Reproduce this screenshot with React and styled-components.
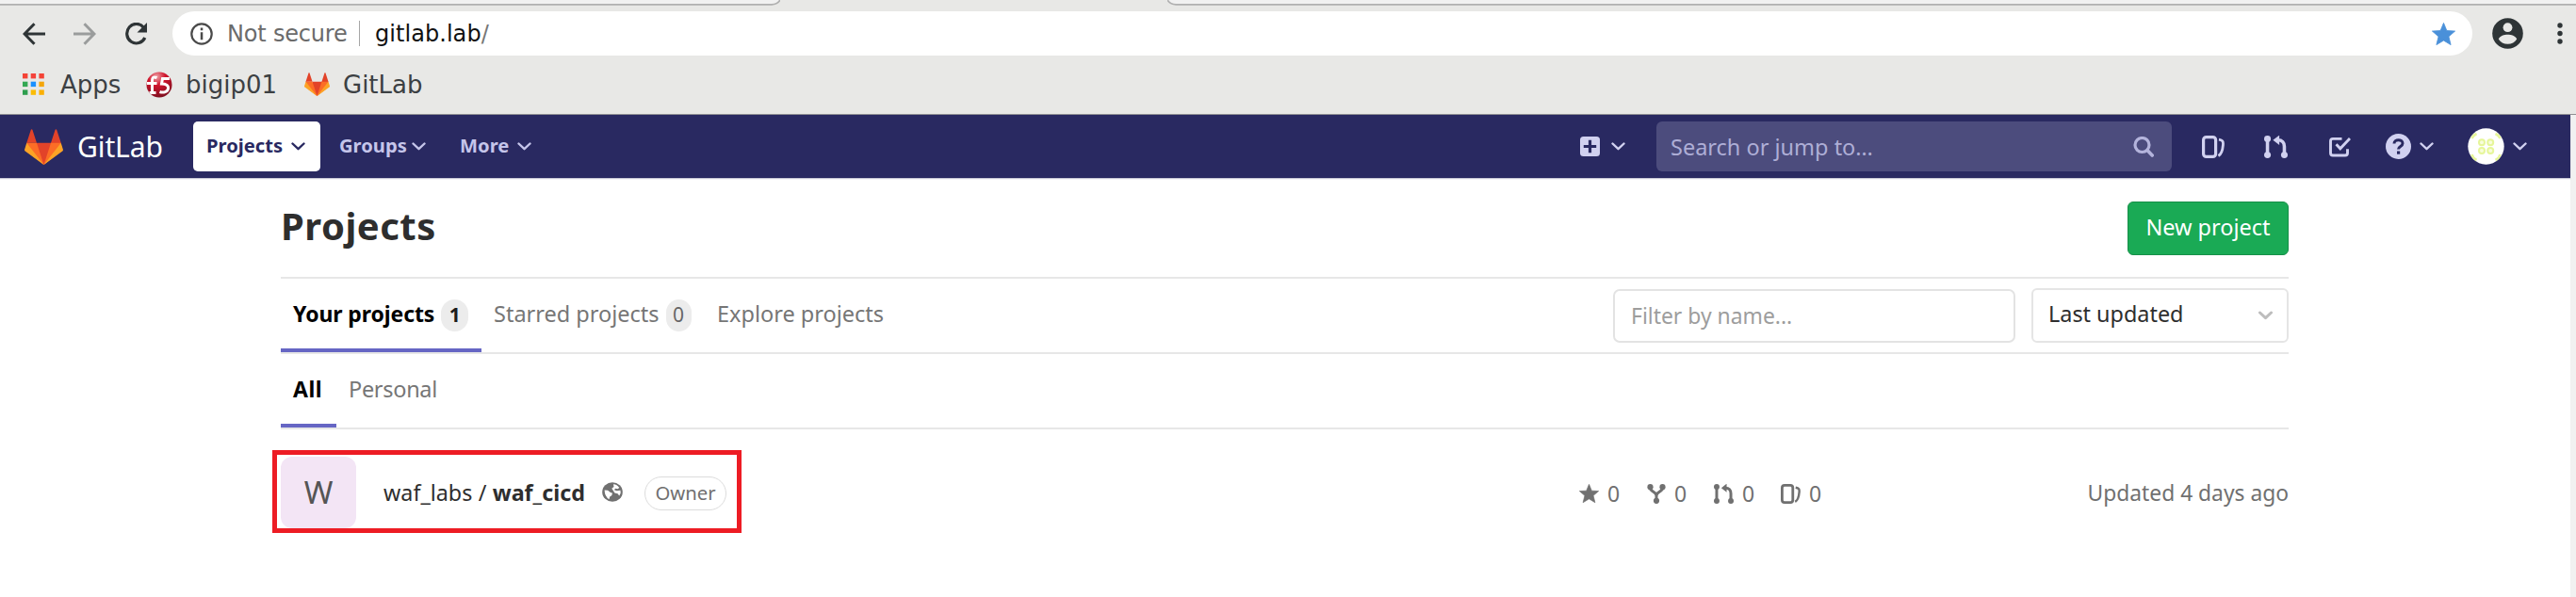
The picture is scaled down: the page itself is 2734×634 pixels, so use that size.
import React from 'react';
import styled, { createGlobalStyle } from 'styled-components';

const GlobalStyle = createGlobalStyle`
  * { box-sizing: border-box; }
  body { margin: 0; background: #fff; overflow: hidden; }
  svg { display: block; flex: none; }
`;

const Screen = styled.div`
  width: 2734px;
  height: 634px;
  display: flex;
  flex-direction: column;
  font-family: 'Noto Sans', 'Open Sans', sans-serif;
  color: #2e2e2e;
`;

/* Browser window */
const Browser = styled.header`
  height: 122px;
  flex: none;
  background: #e8e8e6;
  border-bottom: 1px solid #8e8e93;
  font-family: 'DejaVu Sans', sans-serif;
`;
const TabStrip = styled.div`
  height: 12px;
  display: flex;
  justify-content: space-between;
  align-items: flex-start;
`;
const Toolbar = styled.div`
  height: 47px;
  display: flex;
  align-items: center;
  padding-left: 24px;
  color: #2e3436;
`;
const NavIcons = styled.div`
  display: flex;
  gap: 30px;
  width: 159px;
`;
const AddressBar = styled.div`
  width: 2441px;
  height: 47px;
  border-radius: 24px;
  background: #fff;
  display: flex;
  align-items: center;
  padding: 0 18px 0 19px;
  font-size: 24px;
  line-height: 47px;
  white-space: nowrap;
`;
const Security = styled.span`
  width: 126px;
  margin: 1px 0 0 15px;
  color: #6b6b6b;
  letter-spacing: -0.2px;
`;
const Separator = styled.i`
  width: 1px;
  height: 27px;
  margin: 0 16px 0 14px;
  background: #a5a5a5;
`;
const Url = styled.span`
  flex: 1;
  margin-top: 1px;
  color: #111;
  letter-spacing: 0.05px;
  span { color: #777; }
`;
const ToolbarEnd = styled.div`
  display: flex;
  align-items: center;
  gap: 36px;
  margin-left: 21px;
`;
const Bookmarks = styled.nav`
  height: 61px;
  display: flex;
  align-items: center;
  padding-left: 24px;
  color: #3c4043;
`;
const Bookmark = styled.a`
  display: flex;
  align-items: center;
  gap: ${p => p.$gap}px;
  width: ${p => p.$width}px;
  font-size: 26px;
  white-space: nowrap;
`;

/* Application frame */
const Viewport = styled.div`
  flex: 1;
  display: flex;
  background: #f1f1f1;
`;
const Site = styled.div`
  width: 2728px;
  background: #fff;
`;
const Navbar = styled.nav`
  height: 67px;
  display: flex;
  align-items: center;
  padding-left: 26px;
  background: #292961;
  color: #d1d1f0;
  box-shadow: 0 1px 1px rgba(41, 41, 97, 0.25);
`;
const Brand = styled.a`
  display: flex;
  align-items: center;
  gap: 15px;
  width: 179px;
  font-size: 30px;
  letter-spacing: -0.1px;
  color: #fff;
`;
const NavLink = styled.a`
  height: 53px;
  display: flex;
  align-items: center;
  padding: 0 16px 0 ${p => (p.$active ? 14 : 20)}px;
  border-radius: 5px;
  font-size: 20.2px;
  font-weight: 700;
  color: ${p => (p.$active ? '#292961' : '#c5c5ea')};
  background: ${p => (p.$active ? '#fff' : 'transparent')};
  width: ${p => p.$width}px;
  span { padding-bottom: 3px; flex: 1; white-space: nowrap; }
`;
const NavSpacer = styled.div`
  flex: 1;
`;
const NewMenu = styled.a`
  display: flex;
  align-items: center;
  gap: 12px;
  width: 81px;
`;
const SearchBox = styled.label`
  width: 547px;
  height: 53px;
  border-radius: 6px;
  background: #4c4c7d;
  display: flex;
  align-items: center;
  justify-content: space-between;
  padding: 0 19px 0 15px;
  font-size: 23.5px;
  color: #aeaed6;
`;
const NavActions = styled.div`
  display: flex;
  align-items: center;
  width: 423px;
  padding-left: 32px;
`;
const Action = styled.a`
  display: flex;
  align-items: center;
  gap: 9px;
  width: ${p => p.$width}px;
`;

/* Projects page */
const Container = styled.main`
  width: 2131px;
  margin-left: 298px;
`;
const TitleRow = styled.div`
  height: 107px;
  display: flex;
  align-items: center;
  justify-content: space-between;
  border-bottom: 2px solid #e7e7e7;
`;
const Title = styled.h1`
  margin: 0;
  padding-bottom: 3px;
  font-size: 40px;
  line-height: 56px;
  letter-spacing: 0.5px;
`;
const NewProject = styled.button`
  width: 171px;
  height: 57px;
  margin-top: 2px;
  padding: 0 0 3px;
  border: 1px solid #168f48;
  border-radius: 6px;
  background: #1aaa55;
  color: #fff;
  font: 23.5px 'Noto Sans', sans-serif;
`;
const TabRow = styled.div`
  height: 80px;
  display: flex;
  justify-content: space-between;
  border-bottom: 2px solid #e7e7e7;
`;
const Tabs = styled.div`
  display: flex;
`;
const Tab = styled.a`
  height: 78px;
  width: ${p => p.$width}px;
  padding: 0 13px 5px;
  display: flex;
  align-items: center;
  gap: 7px;
  white-space: nowrap;
  font-size: ${p => (p.$active ? 23 : 23.5)}px;
  font-weight: ${p => (p.$active ? 700 : 400)};
  letter-spacing: ${p => p.$track || 0}px;
  color: ${p => (p.$active ? '#000' : '#767676')};
  box-shadow: ${p => (p.$active ? 'inset 0 -4px #6666c4' : 'none')};
`;
const Count = styled.span`
  width: ${p => p.$width}px;
  height: 34px;
  margin-top: 5px;
  border-radius: 17px;
  background: #ececec;
  color: ${p => (p.$dark ? '#1c1c1c' : '#666')};
  font-size: 21px;
  line-height: 32px;
  text-align: center;
  letter-spacing: 0;
`;
const Filters = styled.div`
  display: flex;
  gap: 17px;
  padding-top: 10px;
`;
const FilterInput = styled.div`
  width: 427px;
  height: 57px;
  margin-top: 1px;
  padding-left: 17px;
  border: 2px solid #e3e3e3;
  border-radius: 7px;
  font-size: 22.9px;
  line-height: 53px;
  color: #9d9d9d;
`;
const SortSelect = styled.div`
  width: 273px;
  height: 58px;
  padding: 0 15px 0 16px;
  border: 2px solid #e5e5e5;
  border-radius: 6px;
  display: flex;
  align-items: center;
  justify-content: space-between;
  font-size: 23.4px;
  span { padding-bottom: 4px; }
`;
const ProjectRow = styled.section`
  height: 88px;
  margin: 22px 0 0 -9px;
  display: flex;
  align-items: center;
`;
const Highlight = styled.div`
  width: 498px;
  height: 88px;
  flex: none;
  border: 5px solid #ed1c24;
  display: flex;
  align-items: center;
  padding-left: 4px;
`;
const Avatar = styled.div`
  width: 80px;
  height: 76px;
  margin-top: 2px;
  border-radius: 12px;
  background: #f3e5f5;
  color: #555;
  font-size: 33px;
  line-height: 76px;
  text-align: center;
`;
const ProjectName = styled.h2`
  width: 232px;
  margin: 1px 0 0 29px;
  font-size: 23.3px;
  line-height: 34px;
  font-weight: 400;
  white-space: nowrap;
  word-spacing: 0.3px;
`;
const RolePill = styled.span`
  width: 87px;
  height: 36px;
  margin: 4px 0 0 23px;
  border: 1px solid #dcdcdc;
  border-radius: 18px;
  color: #707070;
  font-size: 20.3px;
  line-height: 32px;
  text-align: center;
`;
const Stats = styled.div`
  display: flex;
  padding: 4px 0 0 889px;
  color: #707070;
  font-size: 23px;
`;
const Stat = styled.span`
  width: ${p => p.$width}px;
  display: flex;
  align-items: center;
  gap: 9px;
`;
const Updated = styled.time`
  flex: 1;
  padding-top: 3px;
  text-align: right;
  white-space: nowrap;
  color: #707070;
  font-size: 22.8px;
`;

const Chevron = ({ w = 15, h = 9, c = 'currentColor', s = 2.4 }) => (
  <svg width={w} height={h} viewBox="0 0 15 9" fill="none" stroke={c} strokeWidth={s}>
    <path d="M1.5 1.500 7.500 7.200 13.500 1.500" strokeLinecap="round" strokeLinejoin="round" />
  </svg>
);

const Tanuki = ({ w, h }) => (
  <svg width={w} height={h} viewBox="0 1 36 33.4" preserveAspectRatio="none">
    <path fill="#e24329" d="M2 14l9.38 9v-9l-4-12.28c-.205-.632-1.176-.632-1.38 0zM34 14l-9.38 9v-9l4-12.28c.205-.632 1.176-.632 1.38 0zM18 34.38L3 14h30z" />
    <path fill="#fc6d26" d="M18 34.38L11.38 14H2l4 11zM18 34.38L24.62 14H34l-4 11z" />
    <path fill="#fca326" d="M2 14L.1 20.16c-.18.565 0 1.2.5 1.56L18 34.38zM34 14l1.9 6.16c.18.565 0 1.2-.5 1.56L18 34.38z" />
  </svg>
);

const Star = ({ w, h, c }) => (
  <svg width={w} height={h} viewBox="0 0 24 23" preserveAspectRatio="none">
    <path
      fill={c} stroke={c} strokeWidth="0.8" strokeLinejoin="round"
      d="M12 .4l3.200 7.800 8.400.5-6.400 5.500 2.100 8.400L12 18.200l-7.300 4.400 2.100-8.400L.4 8.700l8.400-.5z"
    />
  </svg>
);

const Issues = ({ w, h }) => (
  <svg width={w} height={h} viewBox="0 0 24 24" preserveAspectRatio="none" fill="none" stroke="currentColor" strokeWidth="3.2">
    <rect x="1.600" y="1.600" width="13" height="20.800" rx="3" />
    <path d="M18 4.200c4 .8 4.800 1.800 4.400 5.800-.4 5-1.400 9.500-5 11.500" strokeWidth="2.800" />
  </svg>
);

const MergeRequest = ({ w, h }) => (
  <svg width={w} height={h} viewBox="0 0 24 24" preserveAspectRatio="none" fill="currentColor">
    <circle cx="3.400" cy="3.400" r="3.400" />
    <circle cx="3.400" cy="20.600" r="3.400" />
    <circle cx="20.600" cy="20.600" r="3.400" />
    <path d="M9 4.800L15.500-.4v10.400z" />
    <path d="M3.400 3v18M14 4.800c4.500 0 6.600 2.500 6.600 6.700V20" fill="none" stroke="currentColor" strokeWidth="3.4" />
  </svg>
);

const Fork = () => (
  <svg width="20" height="21" viewBox="0 0 20 21" fill="currentColor">
    <circle cx="3.500" cy="3.200" r="3.100" />
    <circle cx="16.500" cy="3.200" r="3.100" />
    <circle cx="10" cy="17.800" r="3.100" />
    <path d="M3.500 4c0 4.500 6.500 4 6.500 8.500M16.500 4c0 4.500-6.500 4-6.500 8.500V18" fill="none" stroke="currentColor" strokeWidth="3" />
  </svg>
);

const Arrow = ({ flip, c }) => (
  <svg width="24" height="24" viewBox="0 0 24 24" fill="none" stroke={c} strokeWidth="3">
    <path d={flip ? 'M0 12h22M11.500 1.200L22 12 11.500 22.800' : 'M24 12H2M12.500 1.200L2 12l10.500 10.800'} />
  </svg>
);

const Reload = () => (
  <svg width="25" height="24" viewBox="0 0 25 24">
    <path d="M20.500 5.200A10 10.300 0 1 0 21.800 16" fill="none" stroke="#2e3436" strokeWidth="3.200" />
    <path d="M24 0v10.500H13.500z" fill="#2e3436" />
  </svg>
);

const InfoIcon = () => (
  <svg width="24" height="24" viewBox="0 0 24 24">
    <circle cx="12" cy="12" r="10.700" fill="none" stroke="#4a4a4a" strokeWidth="2.200" />
    <path d="M10.800 5.500h2.500v2.700h-2.500zM10.800 10.200h2.500v8h-2.500z" fill="#4a4a4a" />
  </svg>
);

const AccountIcon = () => (
  <svg width="33" height="33" viewBox="0 0 33 33">
    <circle cx="16.500" cy="16.500" r="16.300" fill="#2e3436" />
    <circle cx="16.500" cy="10.200" r="4.900" fill="#e8e8e6" />
    <path d="M6.800 22.500c1.500-3.300 6-4.700 9.700-4.700s8.200 1.400 9.700 4.700c-2 3.400-5.500 5.300-9.700 5.300s-7.700-1.900-9.700-5.300z" fill="#e8e8e6" />
  </svg>
);

const KebabIcon = () => (
  <svg width="6" height="23" viewBox="0 0 6 23" fill="#2e3436">
    <circle cx="3" cy="3" r="2.700" /><circle cx="3" cy="11.500" r="2.700" /><circle cx="3" cy="20" r="2.700" />
  </svg>
);

const APP_COLOURS = ['#f44336', '#f4433c', '#f44336', '#34a853', '#1a90ff', '#f4a60b', '#2e9e4e', '#fbbc05', '#fbb005'];
const AppsIcon = () => (
  <svg width="23" height="23" viewBox="0 0 23 23">
    {APP_COLOURS.map((c, i) => (
      <rect key={i} x={(i % 3) * 8.7} y={Math.floor(i / 3) * 8.7} width="5.400" height="5.400" fill={c} />
    ))}
  </svg>
);

const F5Icon = () => (
  <svg width="28" height="28" viewBox="0 0 28 28">
    <defs>
      <radialGradient id="ball" cx="40%" cy="18%" r="85%">
        <stop offset="0" stopColor="#eda0a5" /><stop offset=".4" stopColor="#d0142c" /><stop offset="1" stopColor="#7c1020" />
      </radialGradient>
      <clipPath id="ballEdge"><circle cx="14" cy="14" r="13.500" /></clipPath>
    </defs>
    <circle cx="14" cy="14" r="13.500" fill="url(#ball)" />
    <g clipPath="url(#ballEdge)" fill="none" stroke="#fff" strokeWidth="3">
      <path d="M1 12.500h10.500M11.500 6.500C7.500 5 6.500 6.500 6.500 10v12.500M3.500 22.500h7" />
      <path d="M25 7.500h-7.500L16.500 13c4.500 0 7.500 1.500 7 5s-5 5-9 3.500" />
    </g>
  </svg>
);

const PlusSquare = () => (
  <svg width="21" height="21" viewBox="0 0 21 21">
    <rect width="21" height="21" rx="3.500" fill="currentColor" />
    <path d="M10.500 3.800v13.400M3.800 10.500h13.400" stroke="#292961" strokeWidth="3.200" />
  </svg>
);

const SearchIcon = () => (
  <svg width="22" height="22" viewBox="0 0 22 22" fill="none" stroke="#b4b4dc" strokeWidth="3.200">
    <circle cx="9.500" cy="9" r="7.500" />
    <path d="M15 14.500l5.200 5.500" strokeLinecap="round" strokeWidth="3.600" />
  </svg>
);

const TodoIcon = () => (
  <svg width="23" height="22" viewBox="0 0 23 22" fill="none" stroke="currentColor" strokeWidth="2.900">
    <path d="M13.500 2.400H4Q1.500 2.400 1.500 5v12.500Q1.500 20 4 20h13q2.500 0 2.500-2.500v-4.300" />
    <path d="M7.500 8.300l4.300 4.500L22 2" />
  </svg>
);

const HelpIcon = () => (
  <svg width="27" height="27" viewBox="0 0 27 27">
    <circle cx="13.500" cy="13.500" r="13.500" fill="currentColor" />
    <path d="M9 10.500C9 5.500 18 5.500 18 10.200c0 3.500-4.500 3-4.500 6.300" fill="none" stroke="#292961" strokeWidth="3" />
    <rect x="12" y="18.500" width="3.200" height="3.200" fill="#292961" />
  </svg>
);

const UserAvatar = () => (
  <svg width="39" height="39" viewBox="0 0 39 39">
    <circle cx="19.500" cy="19.500" r="19.200" fill="#fff" />
    <path d="M4.500 11q1-3 5-5M34.500 11q-1-3-5-5M4.500 28q1 4 5 6M34.500 28q-1 4-5 6" fill="none" stroke="#e6f59a" strokeWidth="2.600" />
    <g fill="#f8fddc" stroke="#e6f69a" strokeWidth="2">
      <circle cx="15" cy="15.300" r="3" /><circle cx="24.200" cy="15.300" r="3" />
      <circle cx="15" cy="24" r="3" /><circle cx="24.200" cy="24" r="3" />
    </g>
  </svg>
);

const Globe = () => (
  <svg width="22" height="21" viewBox="0 0 22 21">
    <ellipse cx="11" cy="10.500" rx="10.800" ry="10.300" fill="#707070" />
    <path d="M2.600 8.500l3.400.3 3 2.200 2 .8-.8 2.400-2 1.300-.7 2.700Q2.800 15.500 2.600 8.500z" fill="#fff" />
    <path d="M12 2.300q4 .2 6.300 3.700l-1.800 1.200-2.300-.5-1.400 1.500 2.800 1 3.900-.4.200 3-1.500 2.800-1.600-2.400-3.200-.6-1.600-2.600-1.500-2.200 2.200-1.800z" fill="#fff" />
  </svg>
);

const InactiveTab = ({ w, right }) => (
  <svg width={w} height="6" viewBox={`0 0 ${w} 6`}>
    <path
      d={right ? `M0 0Q3 5 9 5H${w}V0z` : `M0 0V5H${w - 9}Q${w - 3} 5 ${w} 0z`}
      fill="#f1f1f1"
    />
    <path
      d={right ? `M0 0Q3 4.800 9 4.800H${w}` : `M0 4.800H${w - 9}Q${w - 3} 4.800 ${w} 0`}
      fill="none" stroke="#b0b0b0" strokeWidth="1.800"
    />
  </svg>
);

export default function App() {
  return (
    <Screen>
      <GlobalStyle />
      <Browser>
        <TabStrip>
          <InactiveTab w={828} />
          <InactiveTab w={1495} right />
        </TabStrip>
        <Toolbar>
          <NavIcons>
            <Arrow c="#2e3436" />
            <Arrow c="#9a9c9c" flip />
            <Reload />
          </NavIcons>
          <AddressBar>
            <InfoIcon />
            <Security>Not secure</Security>
            <Separator />
            <Url>gitlab.lab<span>/</span></Url>
            <Star w={25} h={24} c="#4a90d9" />
          </AddressBar>
          <ToolbarEnd>
            <AccountIcon />
            <KebabIcon />
          </ToolbarEnd>
        </Toolbar>
        <Bookmarks>
          <Bookmark $gap={17} $width={131}><AppsIcon />Apps</Bookmark>
          <Bookmark $gap={14} $width={168}><F5Icon />bigip01</Bookmark>
          <Bookmark $gap={14} $width={130}><Tanuki w={27} h={25} />GitLab</Bookmark>
        </Bookmarks>
      </Browser>
      <Viewport>
        <Site>
          <Navbar>
            <Brand><Tanuki w={41} h={38} />GitLab</Brand>
            <NavLink $active $width={135}><span>Projects</span><Chevron /></NavLink>
            <NavLink $width={128}><span>Groups</span><Chevron /></NavLink>
            <NavLink $width={112}><span>More</span><Chevron /></NavLink>
            <NavSpacer />
            <NewMenu><PlusSquare /><Chevron /></NewMenu>
            <SearchBox>Search or jump to…<SearchIcon /></SearchBox>
            <NavActions>
              <Action $width={66}><Issues w={24} h={24} /></Action>
              <Action $width={69}><MergeRequest w={25} h={24} /></Action>
              <Action $width={60}><TodoIcon /></Action>
              <Action $width={87}><HelpIcon /><Chevron /></Action>
              <Action $width={64}><UserAvatar /><Chevron /></Action>
            </NavActions>
          </Navbar>
          <Container>
            <TitleRow>
              <Title>Projects</Title>
              <NewProject>New project</NewProject>
            </TitleRow>
            <TabRow>
              <Tabs>
                <Tab $active $width={213} $track={-0.1}>Your projects<Count $width={29} $dark>1</Count></Tab>
                <Tab $width={237}>Starred projects<Count $width={27}>0</Count></Tab>
                <Tab $width={205}>Explore projects</Tab>
              </Tabs>
              <Filters>
                <FilterInput>Filter by name...</FilterInput>
                <SortSelect><span>Last updated</span><Chevron w={15} h={10} c="#bdbdbd" s={3} /></SortSelect>
              </Filters>
            </TabRow>
            <TabRow>
              <Tabs>
                <Tab $active $width={59} $track={0.5}>All</Tab>
                <Tab $width={122} $track={-0.3}>Personal</Tab>
              </Tabs>
            </TabRow>
            <ProjectRow>
              <Highlight>
                <Avatar>W</Avatar>
                <ProjectName>waf_labs / <b>waf_cicd</b></ProjectName>
                <Globe />
                <RolePill>Owner</RolePill>
              </Highlight>
              <Stats>
                <Stat $width={72}><Star w={21} h={20} c="#707070" />0</Stat>
                <Stat $width={71}><Fork />0</Stat>
                <Stat $width={71}><MergeRequest w={21} h={21} />0</Stat>
                <Stat $width={45}><Issues w={21} h={21} />0</Stat>
              </Stats>
              <Updated>Updated 4 days ago</Updated>
            </ProjectRow>
          </Container>
        </Site>
      </Viewport>
    </Screen>
  );
}
